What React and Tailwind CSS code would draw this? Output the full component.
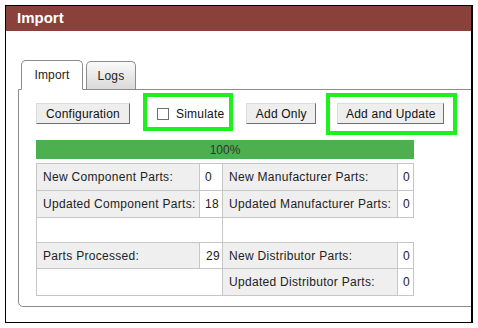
import React from 'react';

const FONT = { fontFamily: '"Liberation Sans", Arial, sans-serif' };

const ROWS = [
    { h: 'h-[27px]', left: ['New Component Parts:', '0', 'left'], right: ['New Manufacturer Parts:', '0'] },
    { h: 'h-[27px]', left: ['Updated Component Parts:', '18', 'left'], right: ['Updated Manufacturer Parts:', '0'] },
    { h: 'h-[25px]', left: null, right: null },
    { h: 'h-[26px]', left: ['Parts Processed:', '29', 'right'], right: ['New Distributor Parts:', '0'] },
    { h: 'h-[27px]', left: null, right: ['Updated Distributor Parts:', '0'] }
];

function Btn({ children, className }) {
    return (
        <button className={`h-[21px] bg-[#eeeeee] border border-t-[#dcdcdc] border-l-[#dcdcdc] border-b-[#6e6e6e] border-r-[#6e6e6e] text-[12px] tracking-[0.2px] text-[#111] leading-none ${className}`}>
            {children}
        </button>
    );
}

export default function App() {
    return (
        <div className="w-[478px] h-[328px] bg-white p-[5px]" style={FONT}>
            <div className="h-[318px] border border-black border-r-2 overflow-hidden flex flex-col">
                {/* Title bar */}
                <div className="h-[25px] shrink-0 bg-[#8a413b] text-white font-bold text-[15px] pl-[11px] flex items-center">
                    Import
                </div>

                <div className="pl-[12px] pt-[29px] overflow-hidden">
                    {/* Tabs */}
                    <div className="flex items-end gap-[3px] pl-[3px] h-[29px]">
                        <div className="relative z-10 w-[62px] h-[30px] -mb-px bg-white border border-[#8c8c8c] border-b-white rounded-t-[5px] text-[12px] tracking-[0.2px] text-[#222] flex items-center justify-center pb-[1px]">
                            Import
                        </div>
                        <div className="w-[50px] h-[28px] bg-gradient-to-b from-[#fafafa] to-[#d9d9d9] border border-[#8c8c8c] border-b-0 rounded-t-[5px] text-[12px] tracking-[0.2px] text-[#222] flex items-center justify-center">
                            Logs
                        </div>
                    </div>

                    {/* Panel */}
                    <div className="relative w-[500px] h-[218px] border border-[#8c8c8c] rounded-bl-[5px] pl-[17px] pt-[13px]">
                        <div className="flex items-center h-[21px]">
                            <Btn className="w-[94px]">Configuration</Btn>
                            <div className="ml-[27px] w-[12px] h-[12px] border border-[#6f6f6f] bg-white"></div>
                            <span className="ml-[7px] text-[12px] tracking-[0.2px] text-[#111]">Simulate</span>
                            <Btn className="ml-[22px] w-[70px]">Add Only</Btn>
                            <Btn className="ml-[21px] w-[107px]">Add and Update</Btn>
                        </div>

                        <div className="mt-[16px] w-[378px] h-[19px] bg-[#4caf50] text-[12px] text-[#333] flex items-center justify-center">
                            100%
                        </div>

                        <table className="mt-[4px] w-[378px] border-collapse text-[12px] tracking-[0.3px] text-[#222]">
                            <tbody>
                                {ROWS.map((r, i) => (
                                    <tr key={i} className={r.h}>
                                        {r.left ? (
                                            <>
                                                <td className="w-[163px] bg-[#efefef] border border-[#c6c6c6] pl-[6px]">{r.left[0]}</td>
                                                <td className={`w-[23px] bg-white border border-[#c6c6c6] ${r.left[2] === 'right' ? 'text-right pr-[2px]' : 'pl-[5px]'}`}>{r.left[1]}</td>
                                            </>
                                        ) : (
                                            <td colSpan={2} className="bg-white border border-[#c6c6c6]"></td>
                                        )}
                                        {r.right ? (
                                            <>
                                                <td className="w-[175px] bg-[#efefef] border border-[#c6c6c6] pl-[6px]">{r.right[0]}</td>
                                                <td className="w-[16px] bg-white border border-[#c6c6c6] pl-[5px]">{r.right[1]}</td>
                                            </>
                                        ) : (
                                            <td colSpan={2} className="bg-white border-y border-l border-[#c6c6c6] border-r-white"></td>
                                        )}
                                    </tr>
                                ))}
                            </tbody>
                        </table>

                        {/* Highlight boxes */}
                        <div className="absolute left-[124px] top-[3px] w-[90px] h-[38px] border-[4px] border-[#1ef01e] pointer-events-none"></div>
                        <div className="absolute left-[307px] top-[3px] w-[131px] h-[42px] border-[4px] border-[#1ef01e] pointer-events-none"></div>
                    </div>
                </div>
            </div>
        </div>
    );
}
